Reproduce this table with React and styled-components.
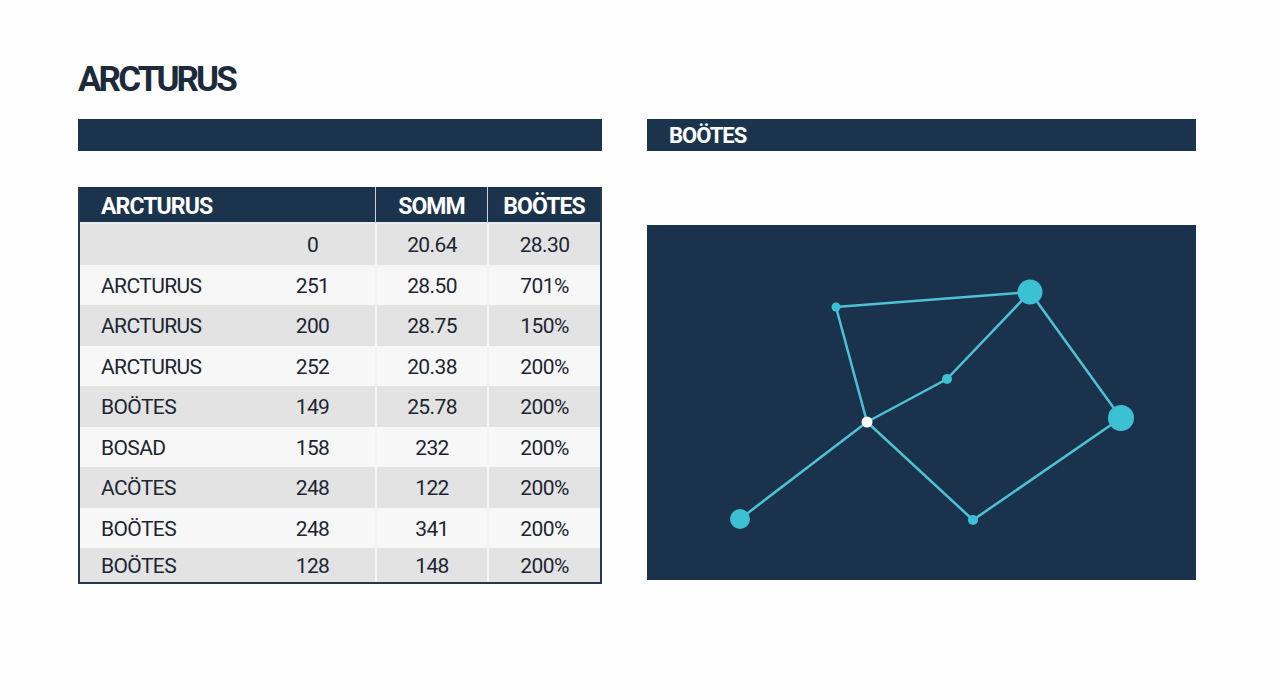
import React from 'react';
import styled, { createGlobalStyle } from 'styled-components';

const GlobalStyle = createGlobalStyle`
  body {
    margin: 0;
    background: #ffffff;
    font-family: Roboto, "Liberation Sans", sans-serif;
  }
`;

const Page = styled.div`
  width: 1280px;
  height: 698px;
  padding: 62px 0 0 78px;
  box-sizing: border-box;
  background: #fefefe;
`;

const Title = styled.h1`
  margin: 0 0 22px;
  font-size: 35px;
  line-height: 35px;
  font-weight: 700;
  letter-spacing: -2.9px;
  color: #1c2a3a;
`;

const Columns = styled.div`
  display: grid;
  grid-template-columns: 524px 549px;
  column-gap: 45px;
  align-items: start;
`;

const Column = styled.div`
  display: flex;
  flex-direction: column;
  gap: ${(p) => p.$gap}px;
`;

const Bar = styled.div`
  height: 32px;
  background: #1c334e;
  display: flex;
  align-items: center;
  padding-left: 22px;
  box-sizing: border-box;
  color: #ffffff;
  font-size: 22px;
  font-weight: 700;
  letter-spacing: -1px;
`;

const Table = styled.div`
  display: grid;
  grid-template-columns: 170px 125px 112px 1fr;
  border: 2px solid #27384d;
  border-top: none;
  box-sizing: border-box;
  width: 524px;
  color: #1d2533;
`;

const HeadCell = styled.div`
  height: 37px;
  padding-top: 3px;
  background: #1c334e;
  color: #ffffff;
  font-size: 23px;
  font-weight: 700;
  letter-spacing: -0.9px;
  display: flex;
  align-items: center;
  justify-content: ${(p) => (p.$left ? 'flex-start' : 'center')};
  padding-left: ${(p) => (p.$left ? '21px' : '0')};
  grid-column: ${(p) => p.$span || 'auto'};
  border-left: ${(p) => (p.$divider ? '1.5px solid #c9d2dc' : 'none')};
  border-bottom: 2px solid #e9edf1;
  box-sizing: border-box;
`;

const Cell = styled.div`
  height: ${(p) => (p.$last ? '34px' : '40.5px')};
  padding-top: ${(p) => (p.$last ? '1px' : '2px')};
  background: ${(p) => (p.$shade ? '#e3e3e3' : '#f7f7f7')};
  font-size: 21px;
  letter-spacing: -0.6px;
  display: flex;
  align-items: center;
  justify-content: ${(p) => (p.$left ? 'flex-start' : 'center')};
  padding-left: ${(p) => (p.$left ? '21px' : '0')};
  border-left: ${(p) => (p.$divider ? '2px solid #f4f4f4' : 'none')};
  box-sizing: border-box;
`;

const ChartPanel = styled.div`
  width: 549px;
  height: 355px;
  background: #1b324d;
`;

const rows = [
  ['', '0', '20.64', '28.30'],
  ['ARCTURUS', '251', '28.50', '701%'],
  ['ARCTURUS', '200', '28.75', '150%'],
  ['ARCTURUS', '252', '20.38', '200%'],
  ['BOÖTES', '149', '25.78', '200%'],
  ['BOSAD', '158', '232', '200%'],
  ['ACÖTES', '248', '122', '200%'],
  ['BOÖTES', '248', '341', '200%'],
  ['BOÖTES', '128', '148', '200%'],
];

const nodes = {
  a: { x: 189, y: 82, r: 4.5, fill: '#3cc0d4' },
  b: { x: 383, y: 67, r: 12.5, fill: '#3cc0d4' },
  c: { x: 300, y: 154, r: 5, fill: '#3cc0d4' },
  d: { x: 220, y: 197, r: 5.5, fill: '#ffffff' },
  e: { x: 474, y: 193, r: 13, fill: '#3cc0d4' },
  f: { x: 93, y: 294, r: 10, fill: '#3cc0d4' },
  g: { x: 326, y: 295, r: 5, fill: '#3cc0d4' },
};

const edges = [
  ['a', 'b'],
  ['a', 'd'],
  ['d', 'c'],
  ['c', 'b'],
  ['b', 'e'],
  ['e', 'g'],
  ['g', 'd'],
  ['d', 'f'],
];

const Constellation = () => (
  <svg width="549" height="355" viewBox="0 0 549 355">
    {edges.map(([from, to]) => (
      <line
        key={from + to}
        x1={nodes[from].x}
        y1={nodes[from].y}
        x2={nodes[to].x}
        y2={nodes[to].y}
        stroke="#4cc3d5"
        strokeWidth="2.5"
      />
    ))}
    {Object.entries(nodes).map(([id, n]) => (
      <circle key={id} cx={n.x} cy={n.y} r={n.r} fill={n.fill} />
    ))}
  </svg>
);

const App = () => {
  return (
    <Page>
      <GlobalStyle />
      <Title>ARCTURUS</Title>
      <Columns>
        <Column $gap={36}>
          <Bar />
          <Table>
            <HeadCell $left $span="span 2">ARCTURUS</HeadCell>
            <HeadCell $divider>SOMM</HeadCell>
            <HeadCell $divider>BOÖTES</HeadCell>
            {rows.map((row, i) =>
              row.map((value, j) => (
                <Cell
                  key={`${i}-${j}`}
                  $shade={i % 2 === 0}
                  $left={j === 0}
                  $divider={j >= 2}
                  $last={i === rows.length - 1}
                >
                  {value}
                </Cell>
              ))
            )}
          </Table>
        </Column>
        <Column $gap={74}>
          <Bar>BOÖTES</Bar>
          <ChartPanel>
            <Constellation />
          </ChartPanel>
        </Column>
      </Columns>
    </Page>
  );
};

export default App;
